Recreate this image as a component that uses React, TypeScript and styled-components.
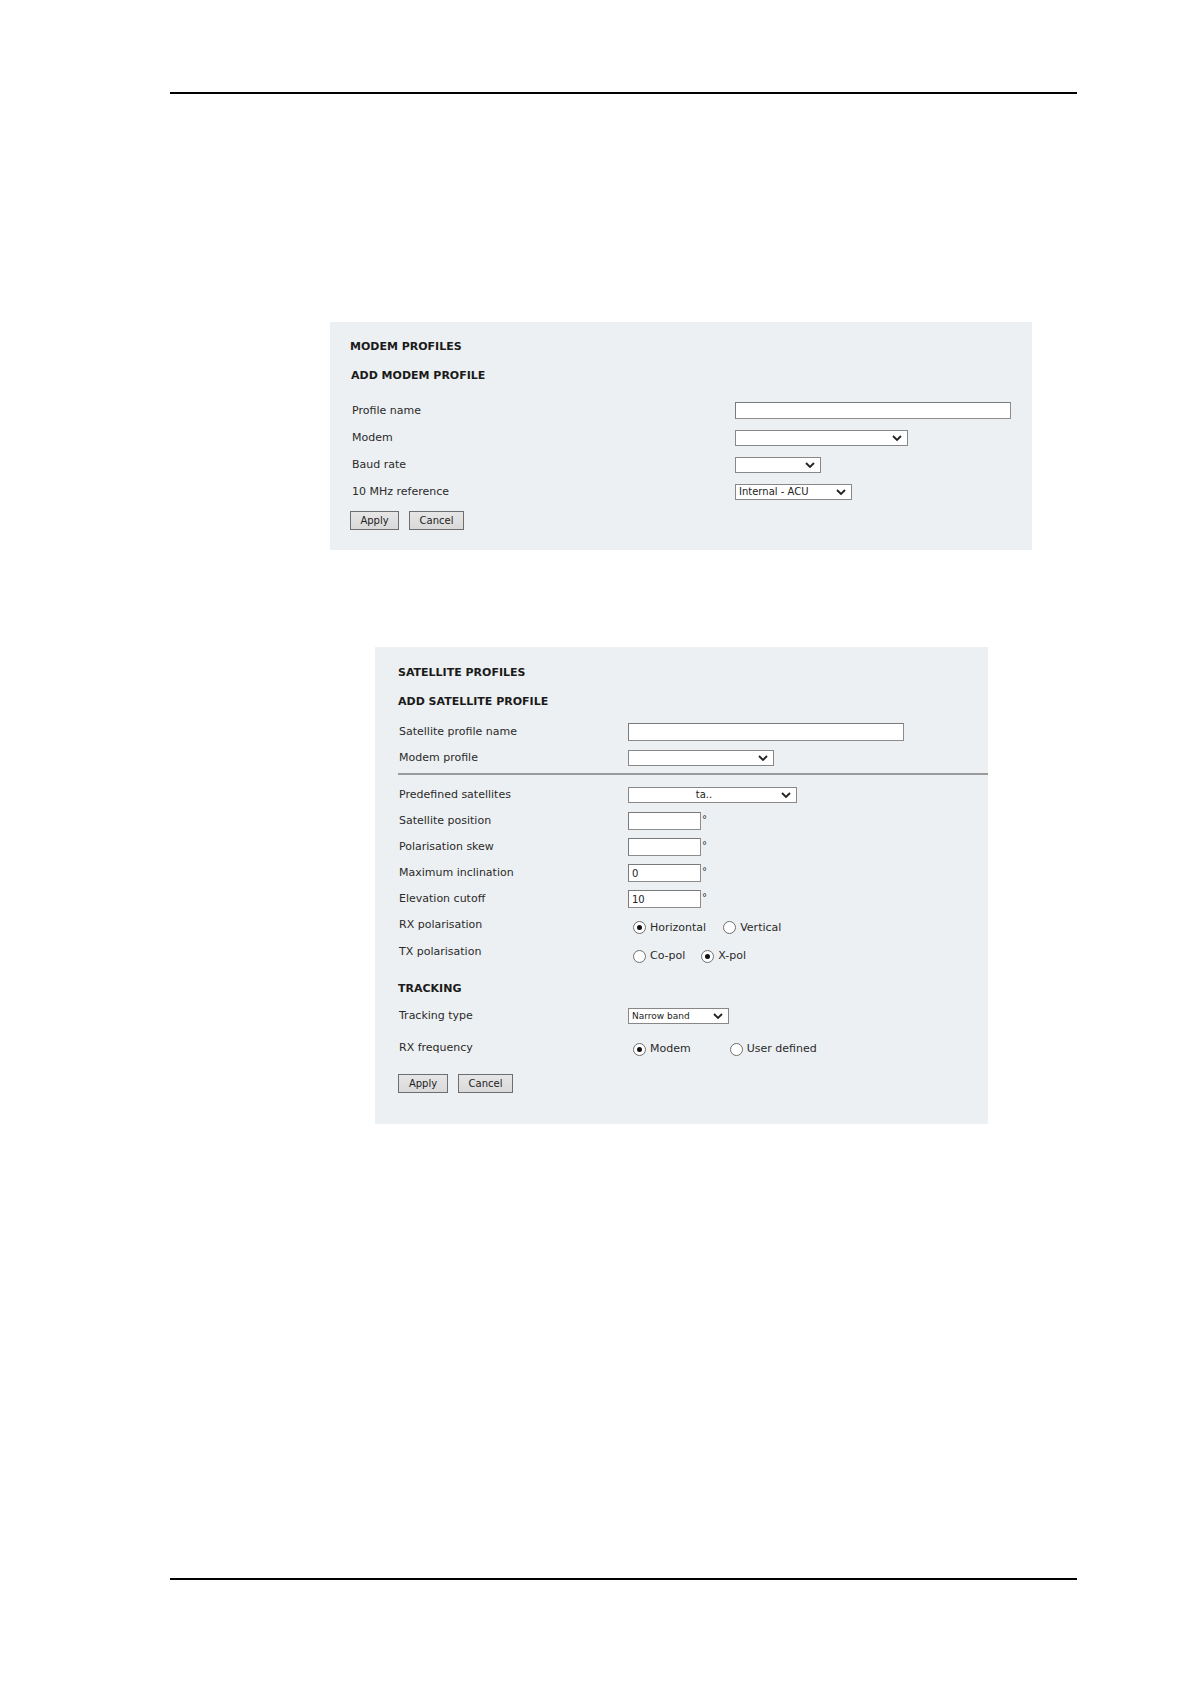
import styled, { createGlobalStyle } from 'styled-components';

const GlobalStyle = createGlobalStyle`
  * {
    box-sizing: border-box;
  }

  body {
    margin: 0;
    background: #ffffff;
    font-family: "DejaVu Sans", Verdana, sans-serif;
    color: #222222;
  }
`;

const Page = styled.div`
  width: 1190px;
  min-height: 1684px;
  padding-top: 92px;
  background: #ffffff;
  display: flex;
  flex-direction: column;
`;

const Rule = styled.div<{ $mt?: number }>`
  margin-left: 170px;
  margin-top: ${p => p.$mt || 0}px;
  width: 907px;
  height: 2px;
  background: #000000;
`;

const Panel = styled.section<{ $left: number; $width: number; $mt: number; $pt: number; $pl: number; $pb: number }>`
  margin-left: ${p => p.$left}px;
  margin-top: ${p => p.$mt}px;
  width: ${p => p.$width}px;
  padding: ${p => p.$pt}px 0 ${p => p.$pb}px ${p => p.$pl}px;
  background: #edf0f2;
  display: flex;
  flex-direction: column;
`;

const Heading = styled.div<{ $mt?: number; $ml?: number }>`
  margin-top: ${p => p.$mt || 0}px;
  margin-left: ${p => p.$ml || 0}px;
  font-size: 11px;
  font-weight: bold;
  line-height: 14px;
  color: #1a1a1a;
`;

const Rows = styled.div<{ $mt: number }>`
  margin-top: ${p => p.$mt}px;
  display: flex;
  flex-direction: column;
`;

const FormRow = styled.div<{ $h: number }>`
  display: flex;
  align-items: center;
  height: ${p => p.$h}px;
`;

const Label = styled.div<{ $w: number; $pl?: number }>`
  width: ${p => p.$w}px;
  flex: none;
  padding-left: ${p => (p.$pl === undefined ? 2 : p.$pl)}px;
  font-size: 11px;
  line-height: 14px;
  color: #2a2a2a;
`;

const Divider = styled.div<{ $mt: number }>`
  margin-top: ${p => p.$mt}px;
  height: 2px;
  background: #9a9a9a;
  margin-bottom: 7px;
`;

const TextField = styled.input<{ $w: number; $h: number }>`
  width: ${p => p.$w}px;
  height: ${p => p.$h}px;
  margin: 0;
  padding: 0 3px;
  border: 1px solid #8c8c8c;
  border-top-color: #7a7a7a;
  border-left-color: #7a7a7a;
  background: #ffffff;
  font-family: "DejaVu Sans", Verdana, sans-serif;
  font-size: 10px;
  color: #222222;
  outline: none;
`;

const FieldWrap = styled.div`
  display: flex;
  align-items: flex-start;
`;

const Degree = styled.span`
  margin-left: 1px;
  margin-top: 3px;
  font-size: 10px;
  line-height: 10px;
  color: #333333;
`;

const SelectBox = styled.div<{ $w: number; $h: number; $fs: number; $align?: string }>`
  width: ${p => p.$w}px;
  height: ${p => p.$h}px;
  display: flex;
  align-items: center;
  justify-content: ${p => p.$align || 'flex-start'};
  position: relative;
  padding: 0 20px 0 3px;
  border: 1px solid #888888;
  background: #ffffff;
  font-size: ${p => p.$fs}px;
  line-height: 1;
  color: #222222;
  white-space: nowrap;

  svg {
    position: absolute;
    right: 5px;
    top: 50%;
    margin-top: -3px;
  }
`;

const RadioGroup = styled.div<{ $gap: number; $mt?: number }>`
  display: flex;
  align-items: center;
  gap: ${p => p.$gap}px;
  margin-left: 5px;
  margin-top: ${p => p.$mt || 0}px;
`;

const RadioOption = styled.label`
  display: flex;
  align-items: center;
  gap: 4px;
  font-size: 11px;
  line-height: 14px;
  color: #2a2a2a;
`;

const RadioCircle = styled.span<{ $on?: boolean }>`
  width: 13px;
  height: 13px;
  border-radius: 50%;
  border: 1px solid #6f6f6f;
  background: #ffffff;
  display: flex;
  align-items: center;
  justify-content: center;

  &::after {
    content: '';
    display: ${p => (p.$on ? 'block' : 'none')};
    width: 5px;
    height: 5px;
    border-radius: 50%;
    background: #111111;
  }
`;

const ButtonBar = styled.div<{ $mt: number }>`
  margin-top: ${p => p.$mt}px;
  display: flex;
  gap: 10px;
`;

const Button = styled.button<{ $w: number }>`
  width: ${p => p.$w}px;
  height: 19px;
  margin: 0;
  padding: 0;
  border: 1px solid #6e6e6e;
  background: linear-gradient(#e6e6e6, #d9d9d9);
  font-family: "DejaVu Sans", Verdana, sans-serif;
  font-size: 10px;
  color: #222222;
`;

const Chevron = () => (
  <svg width="10" height="6" viewBox="0 0 10 6">
    <polyline points="1,1 5,5 9,1" fill="none" stroke="#222222" strokeWidth="1.8" />
  </svg>
);

type SelectProps = { w: number; h?: number; fs?: number; value?: string; align?: string };

const Select = ({ w, h = 16, fs = 10, value = '', align }: SelectProps) => (
  <SelectBox $w={w} $h={h} $fs={fs} $align={align}>
    {value}
    <Chevron />
  </SelectBox>
);

const Radio = ({ on, text }: { on?: boolean; text: string }) => (
  <RadioOption>
    <RadioCircle $on={on} />
    {text}
  </RadioOption>
);

const DegreeField = ({ value }: { value?: string }) => (
  <FieldWrap>
    <TextField $w={73} $h={18} defaultValue={value} readOnly />
    <Degree>°</Degree>
  </FieldWrap>
);

const ModemProfiles = () => (
  <Panel $left={330} $width={702} $mt={228} $pt={18} $pl={20} $pb={20}>
    <Heading>MODEM PROFILES</Heading>
    <Heading $mt={15} $ml={1}>ADD MODEM PROFILE</Heading>
    <Rows $mt={14}>
      <FormRow $h={27}>
        <Label $w={385}>Profile name</Label>
        <TextField $w={276} $h={17} readOnly />
      </FormRow>
      <FormRow $h={27}>
        <Label $w={385}>Modem</Label>
        <Select w={173} />
      </FormRow>
      <FormRow $h={27}>
        <Label $w={385}>Baud rate</Label>
        <Select w={86} />
      </FormRow>
      <FormRow $h={27}>
        <Label $w={385}>10 MHz reference</Label>
        <Select w={117} value="Internal - ACU" />
      </FormRow>
    </Rows>
    <ButtonBar $mt={6}>
      <Button $w={49}>Apply</Button>
      <Button $w={55}>Cancel</Button>
    </ButtonBar>
  </Panel>
);

const SatelliteProfiles = () => (
  <Panel $left={375} $width={613} $mt={97} $pt={19} $pl={23} $pb={31}>
    <Heading>SATELLITE PROFILES</Heading>
    <Heading $mt={15}>ADD SATELLITE PROFILE</Heading>
    <Rows $mt={10}>
      <FormRow $h={26}>
        <Label $w={230} $pl={1}>Satellite profile name</Label>
        <TextField $w={276} $h={18} readOnly />
      </FormRow>
      <FormRow $h={26}>
        <Label $w={230} $pl={1}>Modem profile</Label>
        <Select w={146} />
      </FormRow>
    </Rows>
    <Divider $mt={2} />
    <Rows $mt={0}>
      <FormRow $h={26}>
        <Label $w={230} $pl={1}>Predefined satellites</Label>
        <Select w={169} value="ta.." align="center" />
      </FormRow>
      <FormRow $h={26}>
        <Label $w={230} $pl={1}>Satellite position</Label>
        <DegreeField />
      </FormRow>
      <FormRow $h={26}>
        <Label $w={230} $pl={1}>Polarisation skew</Label>
        <DegreeField />
      </FormRow>
      <FormRow $h={26}>
        <Label $w={230} $pl={1}>Maximum inclination</Label>
        <DegreeField value="0" />
      </FormRow>
      <FormRow $h={26}>
        <Label $w={230} $pl={1}>Elevation cutoff</Label>
        <DegreeField value="10" />
      </FormRow>
      <FormRow $h={26}>
        <Label $w={230} $pl={1}>RX polarisation</Label>
        <RadioGroup $gap={17} $mt={5}>
          <Radio on text="Horizontal" />
          <Radio text="Vertical" />
        </RadioGroup>
      </FormRow>
      <FormRow $h={27}>
        <Label $w={230} $pl={1}>TX polarisation</Label>
        <RadioGroup $gap={16} $mt={9}>
          <Radio text="Co-pol" />
          <Radio on text="X-pol" />
        </RadioGroup>
      </FormRow>
    </Rows>
    <Heading $mt={17}>TRACKING</Heading>
    <Rows $mt={4}>
      <FormRow $h={32}>
        <Label $w={230} $pl={1}>Tracking type</Label>
        <Select w={101} h={16} fs={9} value="Narrow band" />
      </FormRow>
      <FormRow $h={32}>
        <Label $w={230} $pl={1}>RX frequency</Label>
        <RadioGroup $gap={39} $mt={2}>
          <Radio on text="Modem" />
          <Radio text="User defined" />
        </RadioGroup>
      </FormRow>
    </Rows>
    <ButtonBar $mt={10}>
      <Button $w={50}>Apply</Button>
      <Button $w={55}>Cancel</Button>
    </ButtonBar>
  </Panel>
);

const App = () => (
  <>
    <GlobalStyle />
    <Page>
      <Rule />
      <ModemProfiles />
      <SatelliteProfiles />
      <Rule $mt={454} />
    </Page>
  </>
);

export default App;
